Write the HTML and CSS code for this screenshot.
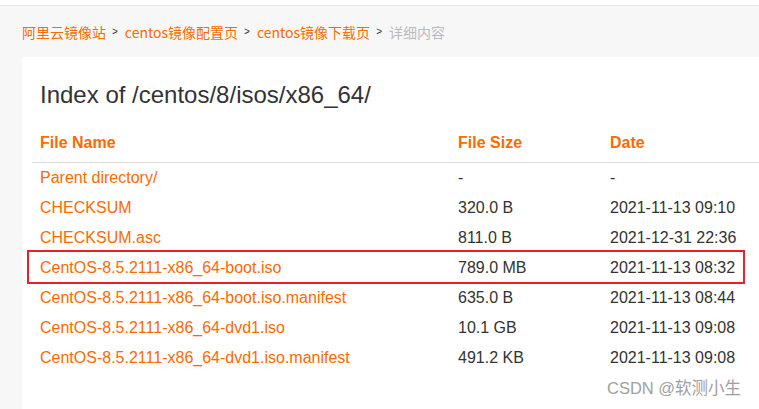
FILE: index.html
```html
<!DOCTYPE html>
<html>
<head>
<meta charset="utf-8">
<link rel="stylesheet" href="styles.css">
</head>
<body>
<div class="topbar"></div>
<div class="main">
  <div class="crumbs">
    <a class="crumb">阿里云镜像站</a><span class="sep">&gt;</span>
    <a class="crumb">centos镜像配置页</a><span class="sep">&gt;</span>
    <a class="crumb">centos镜像下载页</a><span class="sep">&gt;</span>
    <span class="crumb current">详细内容</span>
  </div>
  <div class="card">
    <h1 class="title">Index of /centos/8/isos/x86_64/</h1>
    <table class="list">
      <thead>
        <tr><th class="c-name">File Name</th><th class="c-size">File Size</th><th class="c-date">Date</th></tr>
      </thead>
      <tbody>
        <tr><td><a>Parent directory/</a></td><td>-</td><td>-</td></tr>
        <tr><td><a>CHECKSUM</a></td><td>320.0 B</td><td>2021-11-13 09:10</td></tr>
        <tr><td><a>CHECKSUM.asc</a></td><td>811.0 B</td><td>2021-12-31 22:36</td></tr>
        <tr><td><a>CentOS-8.5.2111-x86_64-boot.iso</a></td><td>789.0 MB</td><td>2021-11-13 08:32</td></tr>
        <tr><td><a>CentOS-8.5.2111-x86_64-boot.iso.manifest</a></td><td>635.0 B</td><td>2021-11-13 08:44</td></tr>
        <tr><td><a>CentOS-8.5.2111-x86_64-dvd1.iso</a></td><td>10.1 GB</td><td>2021-11-13 09:08</td></tr>
        <tr><td><a>CentOS-8.5.2111-x86_64-dvd1.iso.manifest</a></td><td>491.2 KB</td><td>2021-11-13 09:08</td></tr>
      </tbody>
    </table>
  </div>
</div>
<div class="highlight"></div>
<div class="watermark">CSDN @软测小生</div>
</body>
</html>
```
FILE: styles.css
```css
html, body {
  margin: 0;
  padding: 0;
  overflow: hidden;
  background: #f7f7f7;
  font-family: "Liberation Sans", Arial, "Noto Sans CJK SC", sans-serif;
}
body {
  width: 759px;
  height: 409px;
  position: relative;
  display: flex;
  flex-direction: column;
}
.topbar {
  height: 5px;
  background: #ffffff;
  border-bottom: 1px solid #e4e4e4;
}
.main {
  flex: 1;
  display: flex;
  flex-direction: column;
  padding-left: 22px;
  min-height: 0;
}
.crumbs {
  height: 51px;
  display: flex;
  align-items: center;
  font-family: "Noto Sans CJK SC", sans-serif;
  font-size: 14px;
}
.crumb {
  color: #ff6a00;
  line-height: 20px;
}
.crumb.current {
  color: #b8bcc2;
}
.sep {
  font-family: "Liberation Sans", Arial, sans-serif;
  font-size: 10px;
  color: #333;
  padding: 0 7px 0 6px;
}
.card {
  flex: 1;
  background: #ffffff;
  padding: 23px 0 0 10px;
  min-height: 0;
}
.title {
  margin: 0 0 13px 8px;
  font-size: 24px;
  line-height: 30px;
  font-weight: normal;
  color: #333;
}
.list {
  border-collapse: collapse;
  width: 100%;
  font-size: 16px;
}
.list th {
  text-align: left;
  color: #ff6a00;
  font-weight: bold;
  height: 39px;
  padding: 0 0 0 8px;
  border-bottom: 1px solid #dddddd;
}
.list td {
  height: 30px;
  padding: 1px 0 0 8px;
  box-sizing: border-box;
  color: #333;
}
.list td a {
  color: #ff6a00;
}
.c-name { width: 410px; }
.c-size { width: 144px; }
.highlight {
  position: absolute;
  left: 27px;
  top: 250px;
  width: 714px;
  height: 30px;
  border: 2px solid #e8202a;
}
.watermark {
  position: absolute;
  left: 607px;
  top: 378px;
  font-size: 16.5px;
  line-height: 20px;
  color: #a0a0a0;
}
```
